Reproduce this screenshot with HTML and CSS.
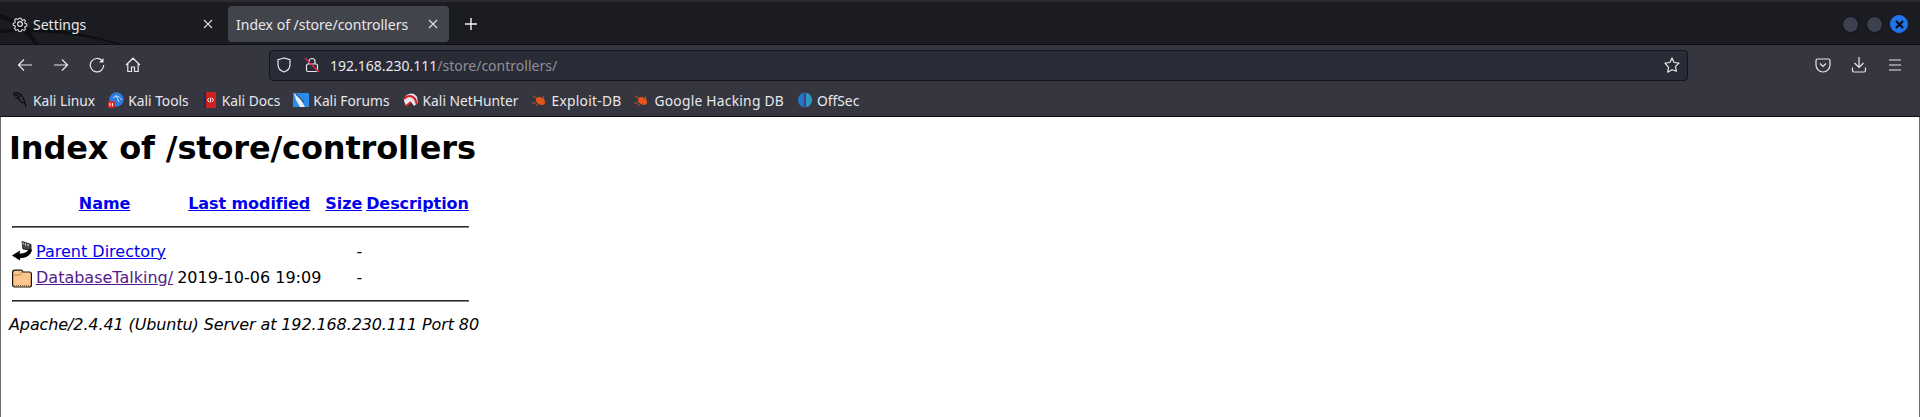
FILE: index.html
```html
<!DOCTYPE html>
<html lang="en">
<head>
<meta charset="utf-8">
<title>Index of /store/controllers</title>
<link rel="stylesheet" href="styles.css">
</head>
<body>
<div class="window">
  <header class="tabbar">
    <svg class="dragon" width="130" height="42" viewBox="0 0 130 42"><path d="M0 28 C30 24 70 26 122 42 L116 42 C80 32 40 28 0 31 Z M0 12 C15 16 30 26 38 42 L34 42 C24 28 12 20 0 16 Z" fill="#0f0f13"/></svg>
    <div class="tab">
      <svg class="tab-ico" width="16" height="16" viewBox="0 0 16 16" fill="none" stroke="#e4e4e7" stroke-width="1.2"><circle cx="8" cy="8" r="2.4"/><path d="M6.7 1h2.6l.4 2 1.3.6 1.8-1 1.800 1.900-1.100 1.700.6 1.300 2 .4v2.600l-2 .4-.6 1.300 1.100 1.700-1.800 1.900-1.800-1.100-1.300.6-.4 2H6.700l-.4-2-1.300-.6-1.800 1.100L1.400 13l1.100-1.700-.6-1.300-2-.4V7l2-.4.6-1.300L1.400 3.500l1.800-1.900 1.800 1 1.300-.6z" transform="translate(1.300 1.300) scale(.84)"/></svg>
      <span class="tab-title">Settings</span>
      <svg class="tab-x" width="10" height="10" viewBox="0 0 10 10" stroke="#d8d8dc" stroke-width="1.1"><path d="M1 1l8 8M9 1l-8 8"/></svg>
    </div>
    <div class="tab tab-active">
      <span class="tab-title">Index of /store/controllers</span>
      <svg class="tab-x" width="10" height="10" viewBox="0 0 10 10" stroke="#e4e4e7" stroke-width="1.1"><path d="M1 1l8 8M9 1l-8 8"/></svg>
    </div>
    <svg class="newtab" width="12" height="12" viewBox="0 0 12 12" stroke="#f4f4f6" stroke-width="1.4"><path d="M6 0v12M0 6h12"/></svg>
    <div class="winbtns">
      <span class="winbtn"></span>
      <span class="winbtn"></span>
      <span class="winbtn winbtn-close"><svg width="9" height="9" viewBox="0 0 9 9" stroke="#0c0d12" stroke-width="2.2"><path d="M1 1l7 7M8 1l-7 7"/></svg></span>
    </div>
  </header>

  <nav class="navbar">
    <div class="navbtns">
      <svg width="16" height="16" viewBox="0 0 16 16" fill="none" stroke="#e8e8ec" stroke-width="1.2"><path d="M15 8H1.500M7 2.500 1.500 8 7 13.500"/></svg>
      <svg width="16" height="16" viewBox="0 0 16 16" fill="none" stroke="#e8e8ec" stroke-width="1.2"><path d="M1 8h13.500M9 2.500 14.500 8 9 13.500"/></svg>
      <svg width="16" height="16" viewBox="0 0 16 16" fill="none" stroke="#e8e8ec" stroke-width="1.2"><path d="M13 3.700A6.700 6.700 0 1 0 14.700 8"/><path d="M14.500 1v4.500H10z" fill="#e8e8ec" stroke="none"/></svg>
      <svg width="16" height="16" viewBox="0 0 16 16" fill="none" stroke="#e8e8ec" stroke-width="1.2"><path d="M1 8 8 1.200 15 8M2.800 6.500v8h3.700V10h3v4.500h3.700v-8"/></svg>
    </div>
    <div class="urlbar">
      <svg width="16" height="16" viewBox="0 0 16 16" fill="none" stroke="#e8e8ec" stroke-width="1.2"><path d="M8 1 2 2.800v5C2 11.500 5 14 8 15c3-1 6-3.500 6-7.200v-5z"/></svg>
      <svg class="lock" width="16" height="16" viewBox="0 0 16 16" fill="none" stroke="#e8e8ec" stroke-width="1.2"><path d="M5 7V4.500a3 3 0 0 1 6 0V7"/><rect x="2.500" y="7" width="11" height="7.500" rx="1.500"/><path d="M1 1l14 14" stroke="#e22850" stroke-width="1.4"/></svg>
      <span class="url"><span class="url-host">192.168.230.111</span><span class="url-path">/store/controllers/</span></span>
      <svg width="16" height="16" viewBox="0 0 16 16" fill="none" stroke="#e8e8ec" stroke-width="1.2"><path d="M8 1l2.100 4.500 4.900.6-3.600 3.300 1 4.800L8 12.800l-4.400 2.400 1-4.800L1 6.100l4.900-.6z" stroke-linejoin="round"/></svg>
    </div>
    <div class="navend">
      <svg width="16" height="16" viewBox="0 0 16 16" fill="none" stroke="#e8e8ec" stroke-width="1.2"><path d="M2.500 2h11A1.500 1.500 0 0 1 15 3.500V8a7 7 0 0 1-14 0V3.500A1.500 1.500 0 0 1 2.500 2z"/><path d="M5 6.500 8 9.500l3-3"/></svg>
      <svg width="16" height="16" viewBox="0 0 16 16" fill="none" stroke="#e8e8ec" stroke-width="1.2"><path d="M8 0v10.500M3.500 6 8 10.500 12.500 6M1.500 10.500v3A1.500 1.500 0 0 0 3 15h10a1.500 1.500 0 0 0 1.500-1.500v-3"/></svg>
      <svg width="16" height="16" viewBox="0 0 16 16" fill="none" stroke="#e8e8ec" stroke-width="1.2"><path d="M2 3h12M2 8h12M2 13h12"/></svg>
    </div>
  </nav>

  <div class="bookmarks">
    <a class="bm"><svg width="16" height="16" viewBox="0 0 16 16" fill="none" stroke="#08080a" stroke-width="1.2"><path d="M0 1c4-.5 7 .5 9 3s2 5 3 7l1 4M0 3c3-.5 5 .5 7 2.500M2 5.500c2 0 4 1 5 3s3 2.500 5 2"/></svg>Kali Linux</a>
    <a class="bm"><svg width="16" height="16" viewBox="0 0 16 16"><circle cx="8.500" cy="7.500" r="7.200" fill="#2d7be0"/><path d="M5 6c3-3 6-2 9 2M8 3l3 7" stroke="#cfe4fa" fill="none" stroke-width="1"/><rect x="0" y="9" width="7" height="7" rx="2" fill="#e02a2a"/><path d="M2 11v3M4.500 11v3" stroke="#fff"/></svg>Kali Tools</a>
    <a class="bm"><svg width="16" height="16" viewBox="0 0 16 16"><rect x="2" y="0" width="12" height="16" fill="#d21e1e"/><rect x="2" y="0" width="2" height="16" fill="#1d2a55"/><path d="M7 6 5.500 8 7 10M10 6l1.500 2L10 10M9 5.500 8 10.500" stroke="#fff" fill="none"/></svg>Kali Docs</a>
    <a class="bm"><svg width="16" height="16" viewBox="0 0 16 16"><rect x="0" y="1" width="16" height="14" fill="#2a8bec"/><path d="M1 1l7 7 4 7H7L3 8z" fill="#e8eef4"/><path d="M3 2l8 8" stroke="#333"/></svg>Kali Forums</a>
    <a class="bm"><svg width="16" height="16" viewBox="0 0 16 16"><path d="M1 9a7 7 0 0 1 13-4l1 6-4 3-3-4-5 4z" fill="#e6e6e8"/><path d="M1 7c3-4 8-4 11 0l2 5" stroke="#d8232a" stroke-width="2.2" fill="none"/><path d="M3 14l5-4" stroke="#d8232a" stroke-width="2"/></svg>Kali NetHunter</a>
    <a class="bm bm-wide"><svg width="16" height="16" viewBox="0 0 16 16"><ellipse cx="8.500" cy="9" rx="5" ry="3.500" fill="#e2541a" transform="rotate(30 8.500 9)"/><path d="M1 4l5 3M0 11h4M4 14l3-3M11 4l1 3" stroke="#c9511e" fill="none"/></svg>Exploit-DB</a>
    <a class="bm bm-wide"><svg width="16" height="16" viewBox="0 0 16 16"><ellipse cx="8.500" cy="9" rx="5" ry="3.500" fill="#e2541a" transform="rotate(30 8.500 9)"/><path d="M1 4l5 3M0 11h4M4 14l3-3M11 4l1 3" stroke="#c9511e" fill="none"/></svg>Google Hacking DB</a>
    <a class="bm"><svg width="16" height="16" viewBox="0 0 16 16"><path d="M7 .8A7.300 7.300 0 0 0 7 15.200z" fill="#2278c8"/><path d="M9 .8a7.300 7.300 0 0 1 0 14.400z" fill="#2a9ac4"/><path d="M8 0v16" stroke="#5a3fc0" stroke-width="1.2"/></svg>OffSec</a>
  </div>

  <main class="page">
    <h1>Index of /store/controllers</h1>
    <table>
      <tr>
        <th class="icon-cell"><span class="blank"></span></th>
        <th><a href="#">Name</a></th>
        <th><a href="#">Last modified</a></th>
        <th><a href="#">Size</a></th>
        <th><a href="#">Description</a></th>
      </tr>
      <tr><th colspan="5"><hr></th></tr>
      <tr>
        <td class="icon-cell"><svg class="file-ico" width="20" height="22" viewBox="0 0 20 22"><path d="M10 1.500 19 4.500 19 10 11 9Z" fill="#4a4a4a" stroke="#000" stroke-width=".8"/><path d="M11 2.500v2M13.500 3.300v2M16 4v2" stroke="#eee"/><path d="M0 15.500 8 10.500 7.600 13.500C11 14 15 12.500 16.500 9.500L20 9.500C19.500 14.500 14 18.500 8.200 18L8 20.500Z" fill="#000"/></svg></td>
        <td><a href="#">Parent Directory</a></td>
        <td>&nbsp;</td>
        <td class="size">-</td>
        <td>&nbsp;</td>
      </tr>
      <tr>
        <td class="icon-cell"><svg class="file-ico" width="20" height="22" viewBox="0 0 20 22"><path d="M.6 6.500C.6 5 1.500 4.200 3 4.200h6c1 0 1.500.8 2 1.800h6.500c1.200 0 1.900.8 1.900 2v11c0 1.200-.8 2-2 2H2.600c-1.200 0-2-.8-2-2z" fill="#fdc68c" stroke="#1a1208" stroke-width="1.2"/><path d="M1.500 9h6c1 0 1.500-.5 2-3" stroke="#a67a44" stroke-width=".8" fill="none"/><path d="M2 19.500h16" stroke="#8a6a3c" stroke-dasharray="1 1"/></svg></td>
        <td><a class="visited" href="#">DatabaseTalking/</a></td>
        <td>2019-10-06 19:09</td>
        <td class="size">-</td>
        <td>&nbsp;</td>
      </tr>
      <tr><th colspan="5"><hr></th></tr>
    </table>
    <address>Apache/2.4.41 (Ubuntu) Server at 192.168.230.111 Port 80</address>
  </main>
</div>
</body>
</html>
```
FILE: styles.css
```css
* { box-sizing: border-box; }
html, body { margin: 0; padding: 0; height: 100%; overflow: hidden; }
.window { display: flex; flex-direction: column; height: 417px; width: 1920px; }

.tabbar { position: relative; display: flex; align-items: center; height: 45px; flex: none; padding-top: 2px; background: #1b1c21; border-top: 2px solid #2b2b31; border-bottom: 1px solid #0e0e11; }
.dragon { position: absolute; left: 0; top: 0; }
.tab { position: relative; display: flex; align-items: center; width: 225px; height: 36px; margin-right: 3px; padding: 0 12px; border-radius: 4px; color: #e8e8ec; font: 14px "Noto Sans", sans-serif; }
.tab-active { background: #42444c; padding: 0 11px 0 8px; width: 221px; margin-right: 0; }
.tab-ico { margin-right: 5px; flex: none; }
.tab-title { flex: 1; white-space: nowrap; overflow: hidden; }
.tab-x { flex: none; }
.newtab { position: relative; margin-left: 15.5px; }
.winbtns { margin-left: auto; display: flex; align-items: center; gap: 7px; padding-right: 12px; }
.winbtn { display: flex; align-items: center; justify-content: center; width: 17px; height: 17px; border-radius: 50%; background: #3c4150; border: 1px solid #0f1014; }
.winbtn-close { background: #2273eb; border-color: #2273eb; width: 18px; height: 18px; }

.navbar { display: flex; align-items: center; height: 38px; flex: none; background: #35363f; padding: 2px 0 0 17px; }
.navbtns { display: flex; align-items: center; gap: 20px; width: 251.5px; }
.urlbar { display: flex; align-items: center; width: 1419.5px; height: 31px; background: #292b36; border: 1px solid #131419; border-radius: 4px; padding: 0 7px 0 6px; }
.lock { margin-left: 12.5px; }
.url { flex: 1; margin-left: 10px; font: 14px "Noto Sans", sans-serif; white-space: nowrap; }
.url-host { color: #e8e8ec; }
.url-path { color: #8f9097; }
.navend { display: flex; align-items: center; gap: 20px; margin-left: 127px; }

.bookmarks { display: flex; align-items: center; height: 34px; flex: none; background: #35363f; border-bottom: 1px solid #0e0e11; padding: 1px 0 0 13px; gap: 13px; }
.bm { display: flex; align-items: center; gap: 4px; color: #e8e8ec; font: 13.8px "Noto Sans", sans-serif; white-space: nowrap; }
.bm-wide { letter-spacing: 0.25px; }

.page { flex: 1; background: #fff; color: #000; border-left: 1px solid #6f6f6f; border-right: 1px solid #6f6f6f; padding: 0 8px; font: 16px "DejaVu Sans", sans-serif; }
h1 { margin: 12px 0 22px; font-size: 32px; font-weight: 700; letter-spacing: -0.14px; }
table { border-spacing: 2px; }
th, td { padding: 1px; }
th { letter-spacing: -0.08px; }
.icon-cell { line-height: 0; vertical-align: top; }
.blank { display: inline-block; width: 20px; height: 22px; }
.file-ico { display: inline-block; }
.size { text-align: right; }
a { color: #0000ee; }
a.visited { color: #551a8b; }
hr { margin: 8px 0; border: 1px inset #808080; }
address { font-style: italic; letter-spacing: -0.11px; margin-top: 2px; }
```
